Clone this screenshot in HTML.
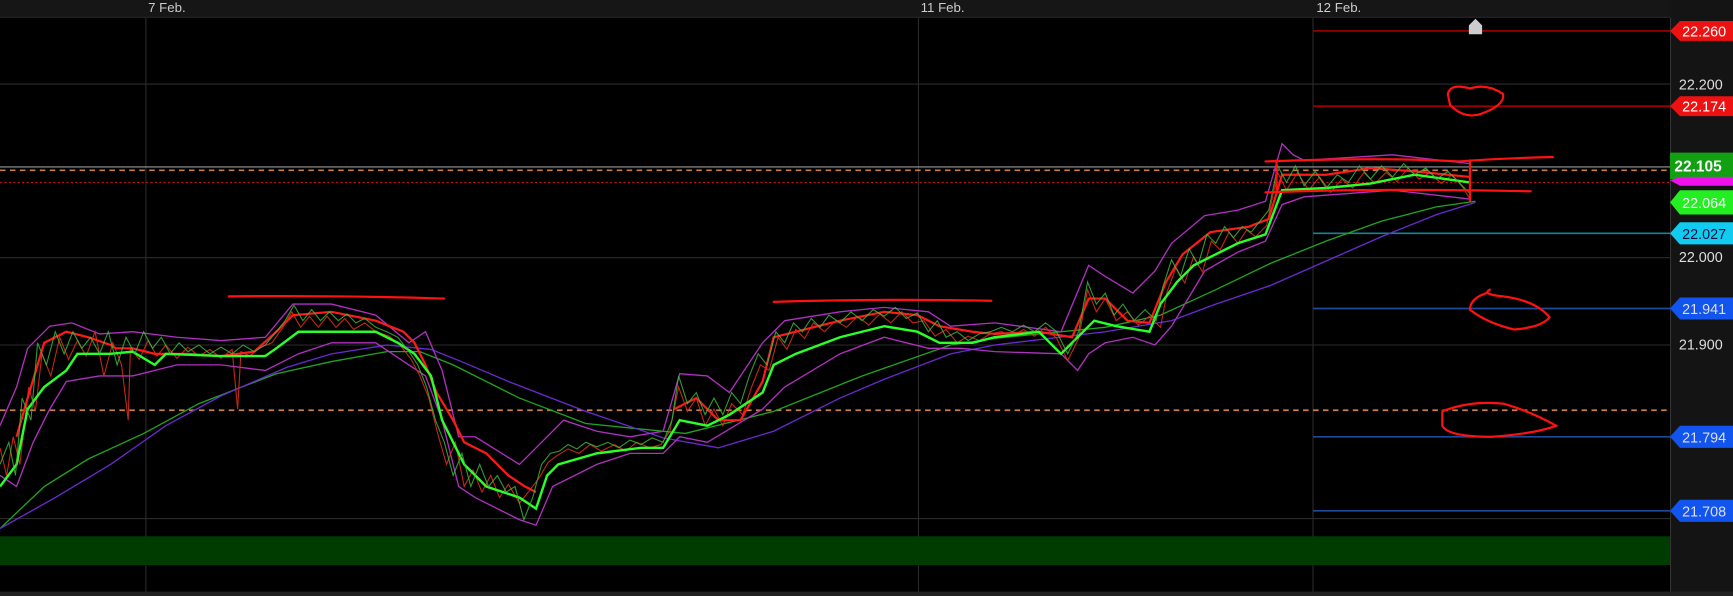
<!DOCTYPE html>
<html><head><meta charset="utf-8"><style>
html,body{margin:0;padding:0;background:#000;overflow:hidden}
svg{display:block}
text{font-family:"Liberation Sans",sans-serif}
</style></head><body>
<svg width="1733" height="596" viewBox="0 0 1568 539" preserveAspectRatio="none" xmlns="http://www.w3.org/2000/svg">
<rect x="0" y="0" width="1568" height="539" fill="#000"/>
<rect x="0" y="0" width="1568" height="15" fill="#161616"/>
<line x1="0" y1="15.5" x2="1568" y2="15.5" stroke="#2a2a2a"/>
<text x="134" y="11" fill="#ccc" font-size="12">7 Feb.</text>
<text x="833" y="11" fill="#ccc" font-size="12">11 Feb.</text>
<text x="1191" y="11" fill="#ccc" font-size="12">12 Feb.</text>
<g stroke="#2b2b2b" stroke-width="1">
<line x1="0" y1="76" x2="1511" y2="76"/>
<line x1="0" y1="233" x2="1511" y2="233"/>
<line x1="0" y1="312" x2="1511" y2="312"/>
<line x1="0" y1="469" x2="1511" y2="469"/>
<line x1="132" y1="16" x2="132" y2="535"/>
<line x1="831" y1="16" x2="831" y2="535"/>
<line x1="1188" y1="16" x2="1188" y2="535"/>
</g>
<rect x="0" y="485" width="1511" height="26" fill="#003c00"/>
<line x1="1188" y1="28" x2="1511" y2="28" stroke="#a00000" stroke-width="1.5"/>
<line x1="1188" y1="96" x2="1511" y2="96" stroke="#a00000" stroke-width="1.5"/>
<line x1="1188" y1="211" x2="1511" y2="211" stroke="#1a7f9a" stroke-width="1.5"/>
<line x1="1188" y1="279" x2="1511" y2="279" stroke="#1d4a9a" stroke-width="1.5"/>
<line x1="1188" y1="395" x2="1511" y2="395" stroke="#1d4a9a" stroke-width="1.5"/>
<line x1="1188" y1="462" x2="1511" y2="462" stroke="#1d4a9a" stroke-width="1.5"/>
<line x1="0" y1="151" x2="1511" y2="151" stroke="#999" stroke-width="1"/>
<line x1="0" y1="154" x2="1511" y2="154" stroke="#c8804a" stroke-width="1.5" stroke-dasharray="5,4"/>
<line x1="0" y1="165" x2="1511" y2="165" stroke="#c01010" stroke-width="1" stroke-dasharray="2,2"/>
<line x1="0" y1="371" x2="1511" y2="371" stroke="#c8804a" stroke-width="1.5" stroke-dasharray="5,4"/>
<polyline fill="none" stroke="#1fa51f" stroke-width="1.2" points="0,478 40,440 80,415 130,392 180,365 250,338 300,327 350,318 380,318 410,330 470,360 530,383 620,392 700,372 780,340 860,312 900,306 1000,296 1050,285 1100,262 1150,238 1200,218 1250,200 1300,187 1335,182"/>
<polyline fill="none" stroke="#6a2ad0" stroke-width="1.2" points="0,478 50,450 100,420 150,385 200,358 260,332 300,320 350,312 390,316 420,328 460,345 530,372 600,396 650,405 700,390 760,360 800,343 860,320 900,312 1000,300 1060,290 1100,275 1150,258 1200,236 1250,214 1300,194 1335,183"/>
<polyline fill="none" stroke="#b030c0" stroke-width="1.2" points="0,385 15,350 25,315 45,295 65,292 90,302 120,300 160,305 200,308 240,305 265,275 300,275 340,285 370,310 385,300 400,335 415,395 430,395 470,420 490,400 510,380 540,390 570,395 600,390 615,338 640,340 660,355 690,310 710,290 760,282 800,278 840,282 860,295 900,292 960,300 985,240 1000,250 1025,265 1045,245 1060,220 1090,195 1120,190 1145,182 1160,130 1170,140 1180,145 1260,140 1330,148"/>
<polyline fill="none" stroke="#b030c0" stroke-width="1.2" points="0,430 15,440 30,400 45,370 60,345 90,340 120,340 160,330 200,330 240,335 270,320 300,310 340,310 370,330 385,340 400,380 415,440 430,450 470,470 485,475 500,440 540,420 570,410 600,410 615,395 640,400 660,388 690,370 710,350 760,320 800,305 840,315 870,315 900,318 960,320 975,335 985,320 1000,310 1025,305 1045,312 1060,295 1090,245 1120,228 1145,218 1160,185 1180,178 1260,172 1330,180"/>
<!-- red noise candles -->
<polyline fill="none" stroke="#e0301a" stroke-width="1" opacity="0.85" points="0,405 6,430 12,395 18,420 26,350 32,372 38,320 46,340 54,305 62,325 70,308 78,322 86,300 94,340 102,310 110,330 116,380 118,315 126,325 134,308 142,322 150,312 160,324 170,314 180,322 190,316 200,324 210,316 215,370 218,318 226,322 236,314 246,310 256,296 264,282 272,296 280,286 288,296 296,286 304,296 312,288 320,298 330,292 340,300 352,304 362,312 372,325 380,340 388,360 396,392 404,420 412,400 420,440 428,425 436,445 444,430 452,450 460,438 470,455 478,445 488,432 496,418 504,412 514,406 524,410 534,402 544,408 556,402 566,408 576,400 588,405 598,402 606,390 614,350 622,372 630,360 638,385 646,370 654,385 662,365 672,375 680,350 688,330 696,335 704,305 712,316 720,298 728,306 736,292 746,300 756,290 766,296 776,286 786,294 796,284 806,292 816,282 826,292 836,290 846,304 856,298 866,310 876,304 886,308 896,302 906,300 916,304 926,298 936,304 946,296 956,306 966,326 976,306 984,262 992,282 1000,270 1010,290 1020,282 1030,294 1040,286 1050,296 1056,264 1064,242 1072,256 1080,232 1088,246 1096,218 1104,226 1112,210 1120,220 1128,208 1136,214 1146,204 1156,156 1164,172 1174,156 1184,172 1194,160 1204,174 1214,162 1224,170 1234,156 1244,166 1254,156 1264,164 1274,152 1284,162 1294,156 1304,166 1314,158 1324,170 1330,180"/>
<polyline fill="none" stroke="#ff1a1a" stroke-width="2" points="15,395 25,360 40,310 60,300 80,305 100,312 105,315 120,315 140,320 170,320 200,322 230,318 250,300 265,285 300,282 340,290 365,300 375,310 385,330 395,355 410,380 420,400 440,410 460,430 475,440 485,445"/>
<polyline fill="none" stroke="#ff1a1a" stroke-width="2" points="610,370 630,360 650,380 670,380 690,345 700,305 720,300 760,290 800,282 830,285 850,295 880,300 900,302 940,300 970,305 985,270 1000,270 1020,290 1040,292 1055,255 1070,230 1095,210 1130,205 1148,198 1160,158 1200,158 1240,152 1280,155 1330,160"/>
<polyline fill="none" stroke="#2aff2a" stroke-width="2.2" points="0,440 15,420 25,370 40,350 60,335 70,320 100,320 120,318 140,330 150,320 200,322 240,322 250,315 270,300 300,300 340,300 360,310 375,320 390,340 400,380 420,420 440,440 470,450 485,460 495,430 505,420 540,410 580,405 600,405 615,380 640,385 660,375 690,355 700,330 720,320 760,305 800,295 830,300 850,310 880,310 900,305 940,300 960,320 975,305 990,290 1010,295 1040,300 1050,275 1065,255 1080,240 1100,230 1120,220 1145,212 1160,172 1200,170 1240,166 1280,158 1330,165"/>
<polyline fill="none" stroke="#3fbf3f" stroke-width="1" opacity="0.8" points="0,420 8,400 14,430 20,360 28,380 34,310 42,330 50,300 58,320 66,300 74,315 82,305 90,320 98,300 106,330 114,305 122,320 130,300 138,315 146,305 154,320 162,310 170,318 180,312 190,320 200,314 210,320 220,312 230,318 240,312 250,300 258,290 266,276 274,290 282,280 290,290 298,282 306,290 314,284 322,292 330,288 340,296 350,300 360,305 370,318 378,330 386,350 394,380 402,400 410,430 418,410 426,440 434,420 442,440 450,430 458,445 466,440 474,470 482,450 490,420 498,410 506,408 514,402 522,406 530,400 540,404 550,400 560,405 570,398 580,402 590,396 600,400 608,380 614,340 622,365 630,355 638,375 646,360 654,375 662,355 670,365 678,340 686,320 694,330 702,300 710,310 718,292 726,300 734,288 742,296 750,285 760,292 770,282 780,290 790,280 800,286 810,278 820,288 830,283 840,300 848,290 856,305 866,300 876,308 886,302 896,300 906,296 916,300 926,294 936,300 946,292 956,300 966,320 976,300 984,255 992,275 1000,265 1008,285 1016,275 1026,290 1036,280 1046,290 1052,260 1060,235 1068,250 1076,225 1084,240 1092,212 1100,220 1108,205 1116,215 1124,205 1132,210 1140,200 1148,190 1156,150 1164,165 1172,150 1180,168 1190,155 1200,170 1210,158 1220,165 1230,150 1240,162 1250,150 1260,160 1270,148 1280,158 1290,152 1300,162 1310,155 1320,165 1330,175"/>
<g fill="none" stroke="#ff1111" stroke-width="2" stroke-linecap="round">
<path d="M207,268 Q300,267 402,270"/>
<path d="M700,273 Q800,270 897,272"/>
<path d="M1145,146 Q1250,142 1320,146 Q1360,143 1405,142"/>
<path d="M1145,174 Q1250,170 1385,173"/>
<path d="M1155,145 L1155,175"/>
<path d="M1330,145 L1330,182"/>
<path d="M1310,85 Q1312,75 1330,80 Q1345,75 1360,85 Q1362,95 1340,103 Q1325,108 1312,95 Z"/>
<path d="M1345,265 Q1330,270 1330,280 Q1345,292 1370,298 Q1395,296 1402,287 Q1390,272 1360,268 Q1340,266 1348,262"/>
<path d="M1305,372 Q1330,362 1360,365 Q1385,372 1408,385 Q1390,392 1350,395 Q1310,395 1305,385 Z"/>
</g>
<path d="M1329,31 L1329,23 L1335,17 L1341,23 L1341,31 Z" fill="#ccc"/>
<rect x="1511" y="0" width="57" height="539" fill="#141414"/>
<line x1="1511.5" y1="16" x2="1511.5" y2="539" stroke="#333"/>
<rect x="0" y="535" width="1568" height="4" fill="#222"/>
<g font-size="13">
<text x="1519" y="81" fill="#ddd">22.200</text>
<text x="1519" y="237" fill="#ddd">22.000</text>
<text x="1519" y="316" fill="#ddd">21.900</text>
</g>
<g font-size="13">
<path d="M1511,28 L1520,19 L1568,19 L1568,37 L1520,37 Z" fill="#ee1111"/>
<text x="1522" y="33" fill="#fff">22.260</text>
<path d="M1511,96 L1520,87 L1568,87 L1568,105 L1520,105 Z" fill="#ee1111"/>
<text x="1522" y="101" fill="#fff">22.174</text>
<rect x="1511" y="138" width="57" height="24" fill="#12a012"/>
<text x="1515" y="155" fill="#fff" font-weight="bold" font-size="14">22.105</text>
<path d="M1511,163 L1520,160 L1568,160 L1568,168 L1520,168 Z" fill="#ee11ee"/>
<path d="M1511,183 L1520,172 L1568,172 L1568,194 L1520,194 Z" fill="#22ee22"/>
<text x="1522" y="188" fill="#fff">22.064</text>
<path d="M1511,211 L1520,201 L1568,201 L1568,221 L1520,221 Z" fill="#11ccf0"/>
<text x="1522" y="216" fill="#114">22.027</text>
<path d="M1511,279 L1520,269 L1568,269 L1568,289 L1520,289 Z" fill="#1155ee"/>
<text x="1522" y="284" fill="#dde">21.941</text>
<path d="M1511,395 L1520,385 L1568,385 L1568,405 L1520,405 Z" fill="#1155ee"/>
<text x="1522" y="400" fill="#dde">21.794</text>
<path d="M1511,462 L1520,452 L1568,452 L1568,472 L1520,472 Z" fill="#1155ee"/>
<text x="1522" y="467" fill="#dde">21.708</text>
</g>
</svg>
</body></html>
